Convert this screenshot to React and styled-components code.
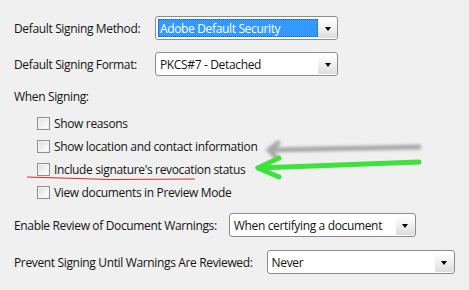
import React from 'react';
import styled, { createGlobalStyle } from 'styled-components';

const GlobalStyle = createGlobalStyle`
  html, body {
    margin: 0;
    padding: 0;
    background: #f0f0f0;
  }
  body {
    font-family: "Open Sans", "DejaVu Sans", sans-serif;
    font-size: 12px;
    color: #141414;
  }
`;

const Panel = styled.div`
  position: relative;
  width: 469px;
  height: 290px;
  box-sizing: border-box;
  padding: 16px 0 0 14px;
  display: flex;
  flex-direction: column;
`;

const FieldRow = styled.div`
  display: flex;
  align-items: center;
  height: 24px;
  margin-bottom: ${p => p.gap || 0}px;
`;

const Label = styled.span`
  width: ${p => (p.width ? `${p.width}px` : 'auto')};
  margin-right: ${p => p.spacing || 0}px;
  white-space: nowrap;
  letter-spacing: -0.35px;
`;

const SelectBox = styled.div`
  width: ${p => p.width}px;
  height: 24px;
  box-sizing: border-box;
  border: 1px solid #8d8d8d;
  border-radius: 3px;
  background: #fff;
  display: flex;
  align-items: stretch;
  padding: 2px 0 2px 2px;
`;

const Value = styled.div`
  flex: 1;
  display: flex;
  align-items: center;
  padding-left: 2px;
  white-space: nowrap;
  letter-spacing: -0.35px;
  color: ${p => (p.selected ? '#fff' : '#141414')};
  background: ${p => (p.selected ? '#3399ff' : 'transparent')};
  outline: ${p => (p.selected ? '1px dotted #1a5fa8' : 'none')};
  outline-offset: -1px;
`;

const DropButton = styled.div`
  width: 19px;
  margin-top: -1px;
  margin-bottom: -1px;
  display: flex;
  align-items: center;
  justify-content: center;
  background: linear-gradient(to bottom, #ffffff 0%, #f2f2f2 45%, #dcdcdc 100%);
  border-radius: 0 2px 2px 0;

  &::after {
    content: '';
    border-left: 3.5px solid transparent;
    border-right: 3.5px solid transparent;
    border-top: 4px solid #000;
    margin-top: 1px;
  }
`;

const SectionTitle = styled.div`
  margin: 13px 0 0;
  height: 16px;
  line-height: 16px;
  letter-spacing: -0.35px;
`;

const OptionList = styled.div`
  display: flex;
  flex-direction: column;
  gap: 9px;
  padding: 11px 0 0 23px;
  margin-bottom: 14px;
`;

const Option = styled.label`
  display: flex;
  align-items: center;
  height: 14px;
  letter-spacing: -0.35px;
  white-space: nowrap;
`;

const Box = styled.span`
  width: 13px;
  height: 13px;
  box-sizing: border-box;
  border: 1px solid #8f8f8f;
  margin-right: 4px;
  background: linear-gradient(135deg, #dcdcdc 0%, #f4f4f4 60%, #ffffff 100%);
  box-shadow: inset 0 0 0 1px #f4f4f4;
`;

const Overlay = styled.svg`
  position: absolute;
  left: 0;
  top: 0;
  pointer-events: none;
`;

const Select = ({ width, value, selected }) => (
  <SelectBox width={width}>
    <Value selected={selected}>{value}</Value>
    <DropButton />
  </SelectBox>
);

const options = [
  'Show reasons',
  'Show location and contact information',
  "Include signature's revocation status",
  'View documents in Preview Mode',
];

export default function App() {
  return (
    <>
      <GlobalStyle />
      <Panel>
        <FieldRow gap={12}>
          <Label width={141}>Default Signing Method:</Label>
          <Select width={183} value="Adobe Default Security" selected />
        </FieldRow>
        <FieldRow>
          <Label width={141}>Default Signing Format:</Label>
          <Select width={183} value="PKCS#7 - Detached" />
        </FieldRow>
        <SectionTitle>When Signing:</SectionTitle>
        <OptionList>
          {options.map(o => (
            <Option key={o}>
              <Box />
              {o}
            </Option>
          ))}
        </OptionList>
        <FieldRow gap={13}>
          <Label spacing={12}>Enable Review of Document Warnings:</Label>
          <Select width={187} value="When certifying a document" />
        </FieldRow>
        <FieldRow>
          <Label spacing={14}>Prevent Signing Until Warnings Are Reviewed:</Label>
          <Select width={188} value="Never" />
        </FieldRow>
        <Overlay width="469" height="290" viewBox="0 0 469 290">
          <defs>
            <filter id="soft" x="-10%" y="-50%" width="120%" height="200%">
              <feGaussianBlur stdDeviation="1.4" />
            </filter>
            <filter id="softer" x="-10%" y="-50%" width="120%" height="200%">
              <feGaussianBlur stdDeviation="0.6" />
            </filter>
          </defs>
          <g stroke="#a9a9a9" strokeWidth="5" strokeLinecap="round" fill="none" filter="url(#soft)">
            <path d="M419 147 L270 150" />
            <path d="M278 143 L269 150 L277 158" />
          </g>
          <g stroke="#3ee23e" strokeWidth="5" strokeLinecap="round" strokeLinejoin="round" fill="none" filter="url(#softer)">
            <path d="M419 162 L258 168" />
            <path d="M279 158 L258 168 L279 177" />
          </g>
          <path d="M27 177 Q110 181 195 179" stroke="#d42a2a" strokeWidth="1" fill="none" />
        </Overlay>
      </Panel>
    </>
  );
}
